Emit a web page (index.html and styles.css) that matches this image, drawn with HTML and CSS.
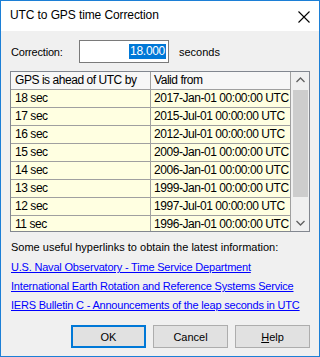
FILE: index.html
```html
<!DOCTYPE html>
<html>
<head>
<meta charset="utf-8">
<link rel="stylesheet" href="styles.css">
</head>
<body>
<div class="window">
  <div class="titlebar">
    <span class="title">UTC to GPS time Correction</span>
    <svg class="close" width="12" height="12" viewBox="0 0 12 12"><path d="M0.5 0.5 L11.5 11.5 M11.5 0.5 L0.5 11.5" stroke="#000" stroke-width="1.1" fill="none"/></svg>
  </div>
  <div class="content">
    <div class="corr-row">
      <span class="label">Correction:</span>
      <div class="input"><span class="sel">18.000</span></div>
      <span class="unit">seconds</span>
    </div>
    <div class="table">
      <div class="grid">
        <div class="row head"><div class="c1">GPS is ahead of UTC by</div><div class="c2">Valid from</div></div>
        <div class="row"><div class="c1">18 sec</div><div class="c2">2017-Jan-01 00:00:00 UTC</div></div>
        <div class="row"><div class="c1">17 sec</div><div class="c2">2015-Jul-01 00:00:00 UTC</div></div>
        <div class="row"><div class="c1">16 sec</div><div class="c2">2012-Jul-01 00:00:00 UTC</div></div>
        <div class="row"><div class="c1">15 sec</div><div class="c2">2009-Jan-01 00:00:00 UTC</div></div>
        <div class="row"><div class="c1">14 sec</div><div class="c2">2006-Jan-01 00:00:00 UTC</div></div>
        <div class="row"><div class="c1">13 sec</div><div class="c2">1999-Jan-01 00:00:00 UTC</div></div>
        <div class="row"><div class="c1">12 sec</div><div class="c2">1997-Jul-01 00:00:00 UTC</div></div>
        <div class="row"><div class="c1">11 sec</div><div class="c2">1996-Jan-01 00:00:00 UTC</div></div>
      </div>
      <div class="scrollbar">
        <svg class="arrow" width="17" height="17" viewBox="0 0 17 17"><path d="M4.5 10 L8.5 6 L12.5 10" stroke="#606060" stroke-width="1.3" fill="none"/></svg>
        <div class="track"><div class="thumb"></div></div>
        <svg class="arrow" width="17" height="17" viewBox="0 0 17 17"><path d="M4.5 7 L8.5 11 L12.5 7" stroke="#606060" stroke-width="1.3" fill="none"/></svg>
      </div>
    </div>
    <p class="info">Some useful hyperlinks to obtain the latest information:</p>
    <a class="link" href="#">U.S. Naval Observatory - Time Service Department</a>
    <a class="link" href="#">International Earth Rotation and Reference Systems Service</a>
    <a class="link" href="#">IERS Bulletin C - Announcements of the leap seconds in UTC</a>
    <div class="buttons">
      <button class="btn default">OK</button>
      <button class="btn">Cancel</button>
      <button class="btn"><u>H</u>elp</button>
    </div>
  </div>
</div>
</body>
</html>
```
FILE: styles.css
```css
html, body {
  margin: 0;
  padding: 0;
}
body {
  width: 320px;
  height: 357px;
  overflow: hidden;
  font-family: "Liberation Sans", Arial, sans-serif;
  font-size: 11px;
  color: #000;
}
.window {
  box-sizing: border-box;
  width: 320px;
  height: 357px;
  border: 1px solid #1c7fd6;
  background: #f0f0f0;
  display: flex;
  flex-direction: column;
}
.titlebar {
  height: 30px;
  background: #fff;
  display: flex;
  align-items: center;
  justify-content: space-between;
  padding: 0 9px 0 9px;
  flex-shrink: 0;
}
.title {
  font-size: 12px;
  letter-spacing: -0.1px;
  position: relative;
  top: -1px;
}
.close {
  display: block;
  margin-top: 1px;
}
.content {
  padding: 9px 9px 0 9px;
  display: flex;
  flex-direction: column;
}
.corr-row {
  display: flex;
  align-items: center;
  height: 23px;
}
.label {
  width: 68px;
  padding-left: 1px;
  letter-spacing: -0.2px;
}
.input {
  box-sizing: border-box;
  width: 90px;
  height: 23px;
  border: 1px solid #7a7a7a;
  background: #fff;
  display: flex;
  align-items: center;
  justify-content: flex-end;
  padding-right: 2px;
}
.sel {
  background: #0078d7;
  color: #fff;
  font-size: 12px;
  letter-spacing: -0.3px;
  line-height: 15px;
  padding: 0 1px;
}
.unit {
  margin-left: 10px;
}
.table {
  margin-top: 8px;
  box-sizing: border-box;
  width: 300px;
  height: 161px;
  border: 1px solid #828790;
  background: #fff;
  display: flex;
  overflow: hidden;
}
.grid {
  width: 280px;
  display: flex;
  flex-direction: column;
}
.row {
  display: flex;
  height: 18px;
  flex-shrink: 0;
  box-sizing: border-box;
  border-bottom: 1px solid #a0a0a0;
  background: #ffffe1;
  font-size: 12px;
  letter-spacing: -0.45px;
}
.row.head {
  background: #f7f7f7;
}
.c1, .c2 {
  box-sizing: border-box;
  width: 140px;
  padding-left: 4px;
  line-height: 17px;
  white-space: nowrap;
  overflow: hidden;
}
.c1 {
  border-right: 1px solid #a0a0a0;
}
.c2 {
  padding-left: 3px;
  border-right: 1px solid #a0a0a0;
}
.scrollbar {
  width: 18px;
  background: #f0f0f0;
  display: flex;
  flex-direction: column;
}
.arrow {
  display: block;
  flex-shrink: 0;
  margin-left: 1px;
}
.track {
  flex: 1;
  padding: 0 1px 0 2px;
  display: flex;
  flex-direction: column;
}
.thumb {
  height: 107px;
  margin-top: 1px;
  background: #cdcdcd;
}
.info {
  margin: 8px 0 0 1px;
  line-height: 15px;
}
.link {
  margin: 6px 0 0 1px;
  color: #0000ff;
  text-decoration: underline;
  line-height: 13px;
  letter-spacing: -0.2px;
  white-space: nowrap;
  align-self: flex-start;
}
.buttons {
  display: flex;
  justify-content: flex-end;
  gap: 7px;
  margin-top: 13px;
}
.btn {
  box-sizing: border-box;
  width: 75px;
  height: 23px;
  background: #e1e1e1;
  border: 1px solid #adadad;
  font-family: "Liberation Sans", Arial, sans-serif;
  font-size: 11px;
  color: #000;
  padding: 0;
}
.btn.default {
  border: 2px solid #0078d7;
}
```
